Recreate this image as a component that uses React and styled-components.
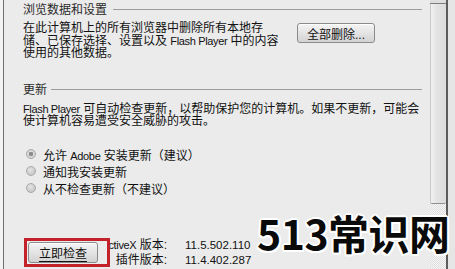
import React from "react";
import styled, { createGlobalStyle } from "styled-components";

const GlobalStyle = createGlobalStyle`
  html, body {
    margin: 0;
    padding: 0;
    width: 455px;
    height: 269px;
    overflow: hidden;
    background: #ebebeb;
  }
  body {
    font-family: "Liberation Sans", "Noto Sans CJK SC", sans-serif;
    font-size: 12px;
    color: #111;
  }
`;

const Frame = styled.div`
  position: relative;
  display: flex;
  width: 455px;
  height: 269px;
  overflow: hidden;
`;

const LeftStrip = styled.div`
  flex: 0 0 3px;
  background: #f3f3f3;
`;

const Panel = styled.div`
  flex: 0 0 427px;
  box-sizing: border-box;
  border-left: 1px solid #6e6e6e;
  background: #ebebeb;
  padding: 0 8px 0 19px;
  display: flex;
  flex-direction: column;
`;

const SectionHeader = styled.div`
  display: flex;
  align-items: center;
  height: 16px;
  margin-top: ${p => p.$top || 0}px;
  color: #2a2a2a;

  span {
    white-space: nowrap;
  }

  &::after {
    content: "";
    flex: 1;
    height: 1px;
    margin: 2px 0 0 ${p => p.$gap || 6}px;
    background: #9d9d9d;
  }
`;

const Lat = styled.span`
  font-size: 11px;
  letter-spacing: -0.35px;
`;

const ClearRow = styled.div`
  display: flex;
  align-items: flex-start;
  margin-top: 6px;
`;

const Para = styled.div`
  flex: ${p => (p.$width ? `0 0 ${p.$width}px` : "none")};
  line-height: 12.5px;
  margin-top: ${p => p.$top || 0}px;
  white-space: nowrap;
`;

const Button = styled.button`
  box-sizing: border-box;
  width: ${p => p.$width}px;
  height: ${p => p.$height}px;
  margin-top: ${p => p.$top || 0}px;
  padding: 0;
  font-family: inherit;
  font-size: 12px;
  color: #111;
  border: 1px solid #8b8b8b;
  border-radius: 3px;
  background: linear-gradient(#f4f4f4, #e4e4e4 50%, #d2d2d2);
  box-shadow: inset 0 1px 0 #fff;
  text-decoration: ${p => (p.$underline ? "underline" : "none")};
  text-underline-offset: 3px;
`;

const RadioList = styled.div`
  display: flex;
  flex-direction: column;
  margin-top: 18px;
`;

const RadioRow = styled.label`
  display: flex;
  align-items: center;
  height: 17px;
  gap: 7px;
  padding-left: 3px;
`;

const RadioDot = styled.span`
  box-sizing: border-box;
  width: 10px;
  height: 10px;
  border-radius: 50%;
  border: 1px solid #a9a9a9;
  background: ${p =>
    p.$checked
      ? "radial-gradient(circle, #8d8d8d 0 2px, #d9d9d9 2.5px, #cfcfcf)"
      : "radial-gradient(circle at 40% 35%, #e4e4e4, #bdbdbd)"};
`;

const BottomRow = styled.div`
  display: flex;
  align-items: flex-start;
  margin-top: 41px;
`;

const Highlight = styled.div`
  position: relative;
  z-index: 1;
  display: flex;
  margin-left: 1px;
  padding: 1px 9px 1px 1px;
  border: 3px solid #c4222a;
  background: #ececec;
`;

const Versions = styled.div`
  display: grid;
  grid-template-columns: 57px auto;
  column-gap: 18px;
  line-height: 15px;
`;

const VLabel = styled.div`
  display: flex;
  justify-content: flex-end;
  white-space: nowrap;
`;

const VValue = styled.div`
  font-size: 11.5px;
  white-space: nowrap;
`;

const Scrollbar = styled.div`
  flex: 0 0 16px;
  display: flex;
  flex-direction: column;
`;

const ArrowStub = styled.div`
  height: 3px;
  background: #dedede;
  border-bottom: 1px solid #7c7c7c;
`;

const Thumb = styled.div`
  box-sizing: border-box;
  height: 200px;
  background: linear-gradient(90deg, #f1f1f1, #e3e3e3 40%, #dcdcdc);
  border-left: 1px solid #c9c9c9;
  border-bottom: 1px solid #8f8f8f;
  border-radius: 0 0 2px 2px;
`;

const Track = styled.div`
  flex: 1;
  background: repeating-conic-gradient(#f6f6f6 0 25%, #dedede 0 50%) 0 0 / 2px 2px;
`;

const ScrollEdge = styled.div`
  flex: 0 0 2px;
  background: #5c5c5c;
`;

const RightStrip = styled.div`
  flex: 1;
  background: #e6e6e6;
`;

const Watermark = styled.div`
  position: absolute;
  left: 257px;
  top: 212px;
  font-family: "Noto Sans CJK SC", sans-serif;
  font-weight: 700;
  font-size: 41px;
  line-height: 1;
  letter-spacing: -0.5px;
  color: #0a0a0a;
  white-space: nowrap;
  text-shadow:
    2px 0 0 #fff, -2px 0 0 #fff, 0 2px 0 #fff, 0 -2px 0 #fff,
    1.5px 1.5px 0 #fff, -1.5px 1.5px 0 #fff, 1.5px -1.5px 0 #fff, -1.5px -1.5px 0 #fff;
  pointer-events: none;
`;

const radios = [
  { checked: true, label: <>允许 <Lat>Adobe</Lat> 安装更新（建议）</> },
  { checked: false, label: "通知我安装更新" },
  { checked: false, label: "从不检查更新（不建议）" },
];

export default function App() {
  return (
    <Frame>
      <GlobalStyle />
      <LeftStrip />
      <Panel>
        <SectionHeader>
          <span>浏览数据和设置</span>
        </SectionHeader>
        <ClearRow>
          <Para $width={274}>
            在此计算机上的所有浏览器中删除所有本地存
            <br />
            储、已保存选择、设置以及 <Lat>Flash Player</Lat> 中的内容
            <br />
            使用的其他数据。
          </Para>
          <Button $width={78} $height={20} $top={1}>全部删除...</Button>
        </ClearRow>

        <SectionHeader $top={21} $gap={4}>
          <span>更新</span>
        </SectionHeader>
        <Para $top={6}>
          <Lat>Flash Player</Lat> 可自动检查更新，以帮助保护您的计算机。如果不更新，可能会
          <br />
          使计算机容易遭受安全威胁的攻击。
        </Para>

        <RadioList>
          {radios.map((r, i) => (
            <RadioRow key={i}>
              <RadioDot $checked={r.checked} />
              <span>{r.label}</span>
            </RadioRow>
          ))}
        </RadioList>

        <BottomRow>
          <Highlight>
            <Button $width={70} $height={21} $underline>立即检查</Button>
          </Highlight>
          <Versions>
            <VLabel><span><Lat>ActiveX</Lat> 版本:</span></VLabel>
            <VValue>11.5.502.110</VValue>
            <VLabel><span>插件版本:</span></VLabel>
            <VValue>11.4.402.287</VValue>
          </Versions>
        </BottomRow>
      </Panel>
      <Scrollbar>
        <ArrowStub />
        <Thumb />
        <Track />
      </Scrollbar>
      <ScrollEdge />
      <RightStrip />
      <Watermark>513常识网</Watermark>
    </Frame>
  );
}
